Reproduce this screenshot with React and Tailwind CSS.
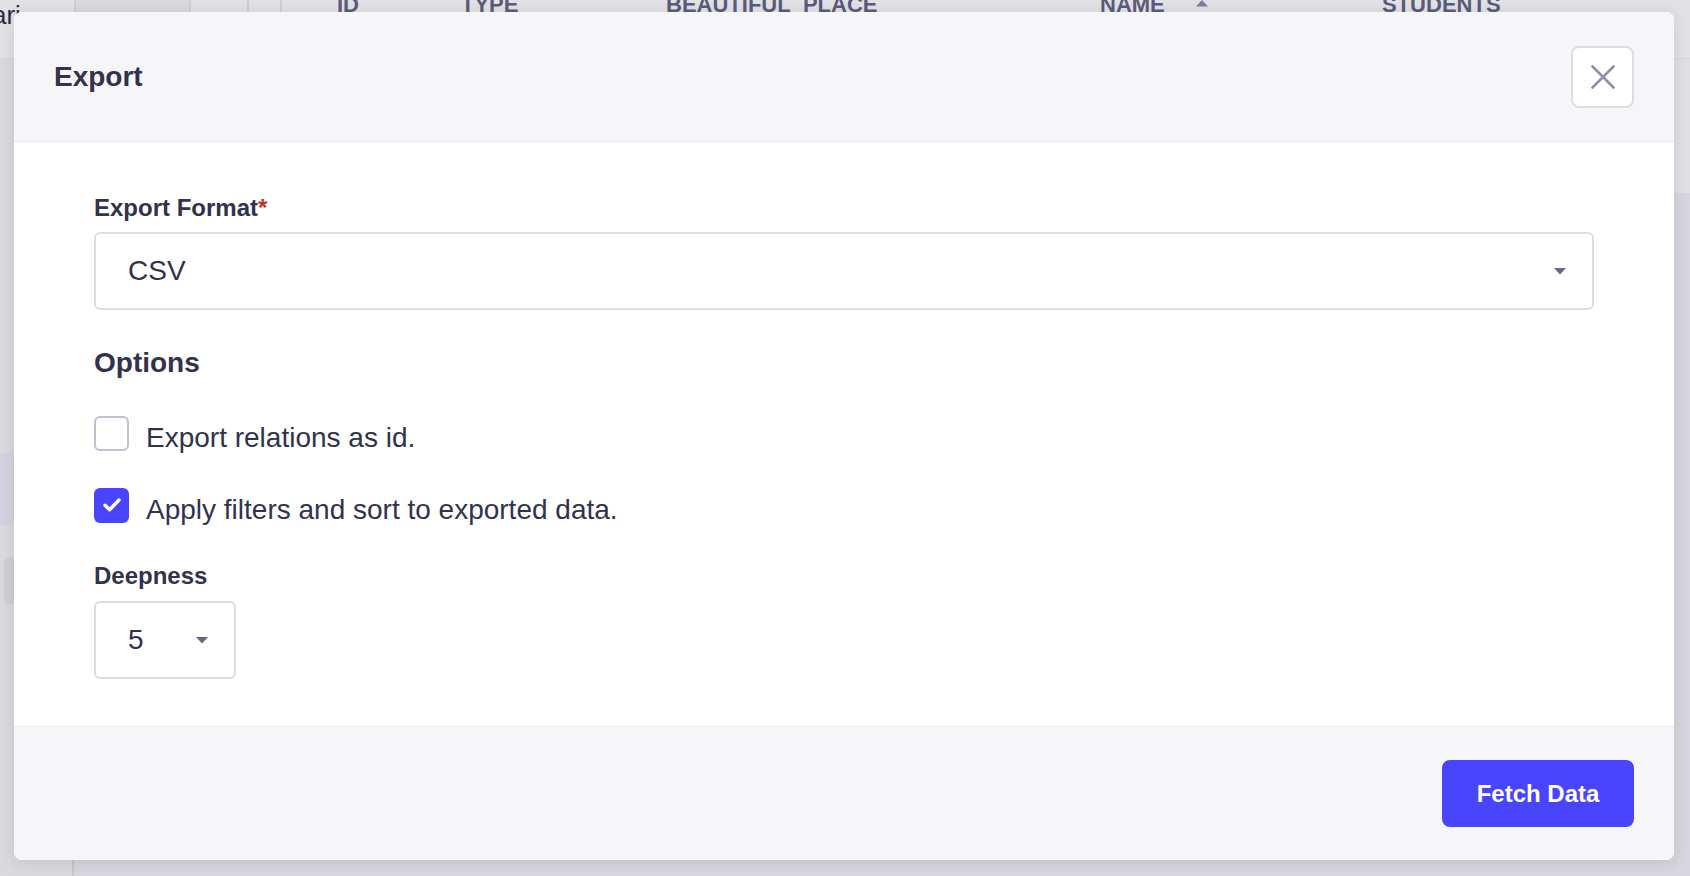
import React from "react";

const font = "font-['Liberation_Sans',Arial,sans-serif]";

function Caret() {
  return (
    <svg width="14" height="8" viewBox="0 0 14 8">
      <path d="M1 1h12l-6 6.5z" fill="#666687" />
    </svg>
  );
}

function Checkbox({ checked }) {
  if (checked) {
    return (
      <span className="w-[35px] h-[35px] rounded-[6px] bg-[#4945ff] flex items-center justify-center shrink-0">
        <svg width="20" height="16" viewBox="0 0 20 16">
          <path d="M3 8.2l4.6 4.6L17 3" fill="none" stroke="#fff" strokeWidth="3.4" strokeLinecap="round" strokeLinejoin="round" />
        </svg>
      </span>
    );
  }
  return <span className="w-[35px] h-[35px] rounded-[6px] border-2 border-[#c0c0cf] bg-white shrink-0" />;
}

function HeadCell({ children }) {
  return <span className="block -mt-[6px] text-[22px] leading-[22px] font-bold text-[#5b5b7a]">{children}</span>;
}

function Background() {
  return (
    <div className="w-full h-full flex flex-col">
      {/* table header behind the overlay */}
      <div className="h-[59px] flex bg-[#e2e2e6] border-b border-[#d4d4db] shrink-0">
        <div className="w-[74px] overflow-hidden">
          <span className="block -ml-[8px] pt-[2px] text-[26px] leading-none text-[#2c2c40]">ari</span>
        </div>
        <div className="w-[115px] bg-[#d9d9de] border-l-2 border-[#cfcfd6]" />
        <div className="w-[58px] border-l-2 border-[#cfcfd6]" />
        <div className="w-[33px] border-l-2 border-[#cfcfd6]" />
        <div className="w-[181px] border-l-2 border-[#cfcfd6] pl-[55px]">
          <HeadCell>ID</HeadCell>
        </div>
        <div className="w-[205px]">
          <HeadCell>TYPE</HeadCell>
        </div>
        <div className="w-[434px]">
          <HeadCell>BEAUTIFUL_PLACE</HeadCell>
        </div>
        <div className="w-[282px] flex items-start gap-[30px]">
          <HeadCell>NAME</HeadCell>
          <svg width="14" height="8" viewBox="0 0 14 8" className="mt-[-1px]">
            <path d="M1 7.5h12L7 1z" fill="#7d7d99" />
          </svg>
        </div>
        <div className="flex-1">
          <HeadCell>STUDENTS</HeadCell>
        </div>
      </div>
      <div className="h-[134px] flex shrink-0">
        <div className="w-[74px] bg-[#d9d9de] overflow-hidden pt-[132px]">
          <span className="block -ml-[12px] text-[26px] leading-[30px] text-[#2c2c40]">eg</span>
        </div>
        <div className="flex-1 bg-[#dfdfe4]" />
      </div>
      <div className="flex-1 flex">
        <div className="w-[74px] bg-[#d9d9de] border-r-2 border-[#c6c6ce] flex flex-col">
          <div className="mt-[260px] h-[72px] bg-[#d2d2e0]" />
          <div className="mt-[32px] h-[47px] mx-[4px] rounded-[6px] bg-[#cfcfd5]" />
        </div>
        <div className="flex-1 bg-[#d6d6dc]" />
      </div>
    </div>
  );
}

export default function App() {
  return (
    <div className={`relative w-[1690px] h-[876px] overflow-hidden bg-[#d6d6dc] ${font}`}>
      <Background />

      {/* modal */}
      <div className="absolute left-[14px] top-[12px] w-[1660px] h-[848px] rounded-[8px] bg-white overflow-hidden flex flex-col shadow-[0_2px_15px_rgba(33,33,52,0.12)]">
        <div className="h-[130px] shrink-0 bg-[#f6f6f9] border-b border-[#eaeaef] px-10 flex items-center justify-between">
          <h2 className="text-[28px] leading-[36px] font-bold text-[#32324d]">Export</h2>
          <button className="w-[63px] h-[62px] rounded-[8px] border-2 border-[#dcdce4] bg-white flex items-center justify-center">
            <svg width="24" height="24" viewBox="0 0 24 24">
              <path d="M1.5 1.5l21 21M22.5 1.5l-21 21" stroke="#8e8ea9" strokeWidth="2.6" strokeLinecap="square" />
            </svg>
          </button>
        </div>

        <div className="flex-1 px-20 pt-[50px]">
          <label className="block text-[24px] leading-[32px] font-bold text-[#32324d]">
            Export Format<span className="text-[#d02b20]">*</span>
          </label>
          <div className="mt-2 h-[78px] rounded-[6px] border-2 border-[#dcdce4] pl-8 pr-[25px] flex items-center justify-between">
            <span className="text-[28px] text-[#32324d]">CSV</span>
            <Caret />
          </div>

          <h3 className="mt-[35px] text-[28px] leading-[36px] font-bold text-[#32324d]">Options</h3>

          <div className="mt-[32px] h-[40px] flex items-center gap-[17px]">
            <Checkbox />
            <span className="mt-[10px] text-[28px] leading-[40px] text-[#32324d]">Export relations as id.</span>
          </div>
          <div className="mt-[32px] h-[40px] flex items-center gap-[17px]">
            <Checkbox checked />
            <span className="mt-[10px] text-[28px] leading-[40px] text-[#32324d]">Apply filters and sort to exported data.</span>
          </div>

          <label className="block mt-[35px] text-[24px] leading-[32px] font-bold text-[#32324d]">Deepness</label>
          <div className="mt-[9px] w-[142px] h-[78px] rounded-[6px] border-2 border-[#dcdce4] pl-8 pr-[25px] flex items-center justify-between">
            <span className="text-[28px] text-[#32324d]">5</span>
            <Caret />
          </div>
        </div>

        <div className="h-[134px] shrink-0 bg-[#f6f6f9] border-t border-[#eaeaef] px-10 flex items-center justify-end">
          <button className="w-[192px] h-[67px] rounded-[8px] bg-[#4945ff] text-white text-[24px] font-bold">
            Fetch Data
          </button>
        </div>
      </div>
    </div>
  );
}
